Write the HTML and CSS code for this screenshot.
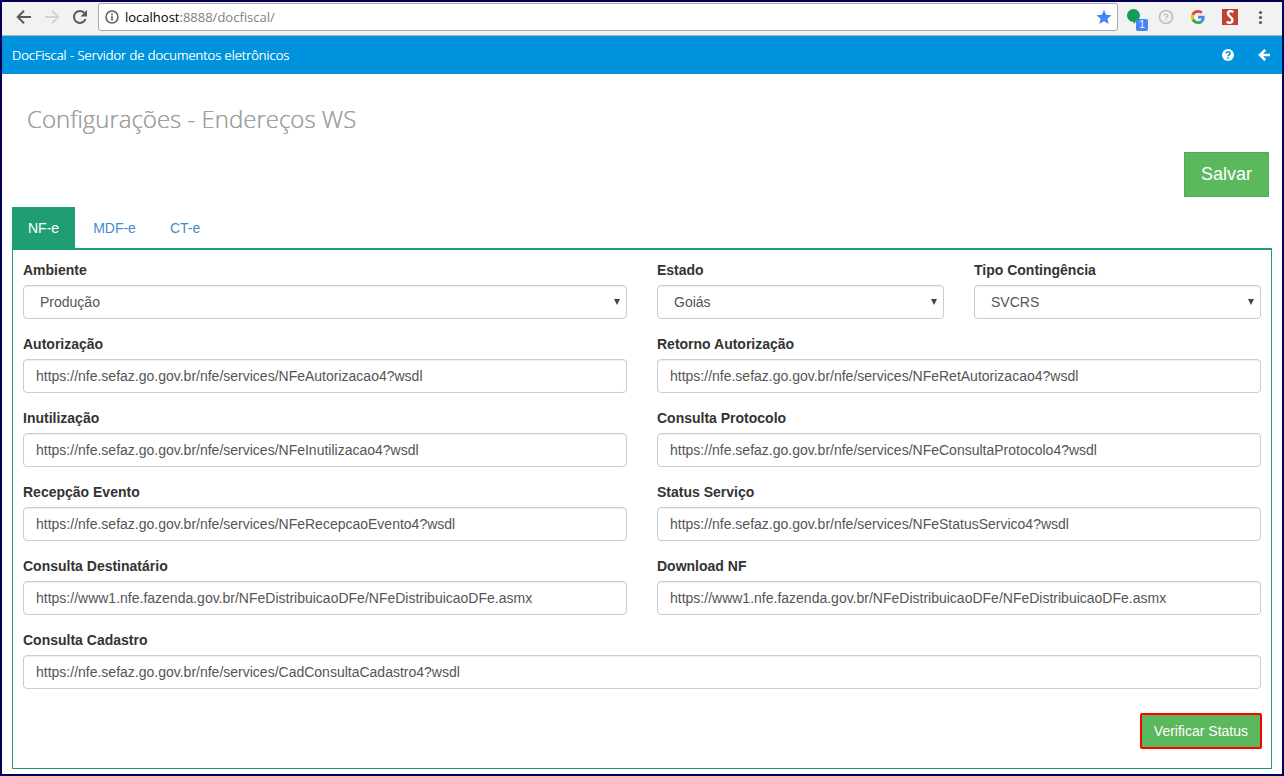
FILE: index.html
```html
<!DOCTYPE html>
<html lang="pt-BR">

<head>
    <meta charset="UTF-8">
    <meta name="viewport" content="width=device-width, initial-scale=1.0">
    <title>DocFiscal - Servidor de documentos eletrônicos</title>
    <link rel="stylesheet" href="styles.css">
</head>

<body>
    <!-- browser toolbar -->
    <div class="toolbar">
        <button class="tool" aria-label="Voltar">
            <svg width="16" height="16" viewBox="0 0 16 16" fill="none" stroke="#5a5a5a" stroke-width="2"><path d="M15 8H2.500M8 1.700L1.700 8L8 14.300" /></svg>
        </button>
        <button class="tool" aria-label="Avançar">
            <svg width="16" height="16" viewBox="0 0 16 16" fill="none" stroke="#d2d2d2" stroke-width="2"><path d="M1 8h12.500M8 1.700L14.300 8L8 14.300" /></svg>
        </button>
        <button class="tool" aria-label="Recarregar">
            <svg width="16" height="16" viewBox="0 0 16 16"><path d="M12.700 4.200A6 6 0 1 0 13.600 10" fill="none" stroke="#5a5a5a" stroke-width="2" /><path d="M15 1v6.500H8.500z" fill="#5a5a5a" /></svg>
        </button>
        <div class="address">
            <svg width="14" height="14" viewBox="0 0 14 14"><circle cx="7" cy="7" r="6" fill="none" stroke="#5a5a5a" stroke-width="1.500" /><path d="M6.200 6.200h1.600v4.200H6.200zM6.200 3.600h1.600v1.600H6.200z" fill="#5a5a5a" /></svg>
            <span class="url">localhost<span>:8888/docfiscal/</span></span>
            <svg width="16" height="16" viewBox="0 0 16 16"><path d="M8 .8l2.100 5 5.400.5-4.100 3.500 1.300 5.300L8 12.300l-4.700 2.800 1.300-5.300L.5 6.300l5.400-.5z" fill="#4285f4" /></svg>
        </div>
        <div class="extensions">
            <span class="hangouts">
                <svg width="16" height="16" viewBox="0 0 16 16"><path d="M7.500 0a6.500 6.500 0 1 1 0 13 6.500 6.500 0 1 1 0-13zM7 11h4l-3 4z" fill="#0f9d58" /></svg>
                <span class="count">1</span>
            </span>
            <svg width="16" height="16" viewBox="0 0 16 16" fill="none" stroke="#bdbdbd"><circle cx="8" cy="8" r="6.500" stroke-width="1.600" /><path d="M6.200 6.700C6.200 4.500 9.800 4.500 9.800 6.700C9.800 7.900 8 7.900 8 9.300M8 10.300v1.400" stroke-width="1.300" /></svg>
            <svg width="16" height="16" viewBox="-3 -3 54 54"><path fill="#4285f4" d="M46.500 24.500c0-1.600-.1-3.100-.4-4.500H24v9h12.700c-.6 2.900-2.200 5.400-4.700 7.100l7.500 5.800c4.400-4.100 7-10.100 7-17.400z" /><path fill="#34a853" d="M24 48c6.500 0 11.900-2.100 15.900-5.800L32 36.100c-2.100 1.500-4.800 2.400-8 2.400-6.200 0-11.500-4.200-13.500-9.900l-8 6.200C6.500 42.600 14.600 48 24 48z" /><path fill="#fbbc05" d="M10.500 28.600c-.5-1.500-.8-3-.8-4.600s.3-3.100.8-4.600l-8-6.200C.9 16.500 0 20.100 0 24s.9 7.500 2.500 10.800z" /><path fill="#ea4335" d="M24 9.500c3.500 0 6.700 1.200 9.200 3.600l6.900-6.900C35.900 2.400 30.500 0 24 0 14.600 0 6.500 5.400 2.500 13.200l8 6.200C12.500 13.700 17.800 9.500 24 9.500z" /></svg>
            <svg width="16" height="16" viewBox="0 0 16 16"><path d="M0 0h16v16H0z" fill="#c0432f" /><path d="M11.300 3.200C8.800 1.200 5.900 2.200 6 4.700C6.200 7.700 10.400 7.900 10.400 11C10.400 14.200 7 14.400 4.700 12.800" fill="none" stroke="#fff" stroke-width="2.400" /></svg>
            <svg width="16" height="16" viewBox="0 0 16 16" fill="#5a5a5a"><circle cx="6.500" cy="3.500" r="1.600" /><circle cx="6.500" cy="8.500" r="1.600" /><circle cx="6.500" cy="13.500" r="1.600" /></svg>
        </div>
    </div>

    <header class="navbar">
        <a class="brand" href="#">DocFiscal - Servidor de documentos eletrônicos</a>
        <nav>
            <a href="#" aria-label="Ajuda">
                <svg width="12" height="12" viewBox="0 0 12 12"><circle cx="6" cy="6" r="6" fill="#fff" /><path d="M4 4.500C4.200 2.200 8 2.200 8 4.400C8 5.700 6.100 5.600 6.100 7.300M6.100 8.200v1.600" fill="none" stroke="#0093dd" stroke-width="1.700" /></svg>
            </a>
            <a href="#" aria-label="Voltar">
                <svg width="12" height="12" viewBox="0 0 12 12" fill="none" stroke="#fff" stroke-width="2.600"><path d="M12 6H2M7.200 .9L2 6L7.200 11.100" /></svg>
            </a>
        </nav>
    </header>

    <main class="content">
        <h1>Configurações - Endereços WS</h1>
        <div class="actions">
            <button class="btn btn-lg">Salvar</button>
        </div>

        <ul class="tabs">
            <li><a class="active" href="#">NF-e</a></li>
            <li><a href="#">MDF-e</a></li>
            <li><a href="#">CT-e</a></li>
        </ul>

        <form class="panel">
            <div class="group half">
                <label for="ambiente">Ambiente</label>
                <div class="select">
                    <select id="ambiente">
                        <option>Produção</option>
                    </select>
                </div>
            </div>
            <div class="group">
                <label for="estado">Estado</label>
                <div class="select">
                    <select id="estado">
                        <option>Goiás</option>
                    </select>
                </div>
            </div>
            <div class="group">
                <label for="contingencia">Tipo Contingência</label>
                <div class="select">
                    <select id="contingencia">
                        <option>SVCRS</option>
                    </select>
                </div>
            </div>
            <div class="group half">
                <label for="autorizacao">Autorização</label>
                <input type="text" id="autorizacao" value="https://nfe.sefaz.go.gov.br/nfe/services/NFeAutorizacao4?wsdl">
            </div>
            <div class="group half">
                <label for="retorno">Retorno Autorização</label>
                <input type="text" id="retorno" value="https://nfe.sefaz.go.gov.br/nfe/services/NFeRetAutorizacao4?wsdl">
            </div>
            <div class="group half">
                <label for="inutilizacao">Inutilização</label>
                <input type="text" id="inutilizacao" value="https://nfe.sefaz.go.gov.br/nfe/services/NFeInutilizacao4?wsdl">
            </div>
            <div class="group half">
                <label for="protocolo">Consulta Protocolo</label>
                <input type="text" id="protocolo" value="https://nfe.sefaz.go.gov.br/nfe/services/NFeConsultaProtocolo4?wsdl">
            </div>
            <div class="group half">
                <label for="evento">Recepção Evento</label>
                <input type="text" id="evento" value="https://nfe.sefaz.go.gov.br/nfe/services/NFeRecepcaoEvento4?wsdl">
            </div>
            <div class="group half">
                <label for="status">Status Serviço</label>
                <input type="text" id="status" value="https://nfe.sefaz.go.gov.br/nfe/services/NFeStatusServico4?wsdl">
            </div>
            <div class="group half">
                <label for="destinatario">Consulta Destinatário</label>
                <input type="text" id="destinatario" value="https://www1.nfe.fazenda.gov.br/NFeDistribuicaoDFe/NFeDistribuicaoDFe.asmx">
            </div>
            <div class="group half">
                <label for="download">Download NF</label>
                <input type="text" id="download" value="https://www1.nfe.fazenda.gov.br/NFeDistribuicaoDFe/NFeDistribuicaoDFe.asmx">
            </div>
            <div class="group full">
                <label for="cadastro">Consulta Cadastro</label>
                <input type="text" id="cadastro" value="https://nfe.sefaz.go.gov.br/nfe/services/CadConsultaCadastro4?wsdl">
            </div>
            <div class="footer full">
                <button type="button" class="btn btn-verify">Verificar Status</button>
            </div>
        </form>
    </main>
</body>

</html>
```
FILE: styles.css
```css
* {
    box-sizing: border-box;
}

body {
    margin: 0;
    min-height: 100vh;
    border: 2px solid #000058;
    background-color: #fff;
    font-family: "Liberation Sans", Arial, sans-serif;
    font-size: 14px;
    line-height: 20px;
    color: #333;
}

svg {
    display: block;
    flex: none;
}

a {
    text-decoration: none;
}

/* browser toolbar */
.toolbar {
    display: flex;
    align-items: center;
    height: 34px;
    padding: 0 12px 3px 14px;
    gap: 12px;
    background-color: #f2f2f2;
    border-bottom: 1px solid #b5b5b5;
}

.tool {
    padding: 0;
    border: none;
    background: none;
}

.address {
    flex: 1;
    display: flex;
    align-items: center;
    gap: 6px;
    height: 28px;
    margin-left: -2px;
    padding: 0 5px 0 6px;
    background-color: #fff;
    border: 1px solid #a9a9a9;
    border-radius: 3px;
}

.url {
    flex: 1;
    font-family: "Open Sans", sans-serif;
    font-size: 13px;
    color: #000;
}

.url span {
    color: #808080;
}

.extensions {
    display: flex;
    align-items: center;
    gap: 16px;
    margin-left: -4px;
}

.hangouts {
    position: relative;
}

.count {
    position: absolute;
    left: 10px;
    top: 10px;
    width: 12px;
    height: 12px;
    border-radius: 2px;
    background-color: #4285f4;
    color: #fff;
    font-size: 10px;
    line-height: 12px;
    text-align: center;
}

/* page header */
.navbar {
    display: flex;
    justify-content: space-between;
    align-items: center;
    height: 38px;
    padding: 0 12px 0 10px;
    background-color: #0093dd;
    font-family: "Open Sans", sans-serif;
    font-size: 13px;
    font-weight: 300;
}

.brand {
    color: #fff;
    text-shadow: 0 0 0 #fff;
}

.navbar nav {
    display: flex;
    gap: 24px;
}

.content {
    padding: 30px 10px 5px;
}

h1 {
    margin: 0;
    padding-left: 15px;
    font-family: "Open Sans", sans-serif;
    font-size: 24px;
    line-height: 30px;
    font-weight: 300;
    color: #a0a0a0;
    text-shadow: 0 0 0 #a0a0a0;
}

.actions {
    display: flex;
    justify-content: flex-end;
    padding: 18px 3px 10px;
}

.btn {
    padding: 6px 12px;
    border: 1px solid #4cae4c;
    background-color: #5cb85c;
    color: #fff;
    font-family: inherit;
    font-size: 14px;
    line-height: 20px;
    cursor: pointer;
}

.btn:hover {
    background-color: #449d44;
}

.btn-lg {
    padding: 10px 16px;
    font-size: 18px;
    line-height: 23px;
}

.btn-verify {
    border: 2px solid #f00;
    border-radius: 2px;
}

/* tabs */
.tabs {
    display: flex;
    gap: 2px;
    margin: 0;
    padding: 0;
    list-style: none;
}

.tabs a {
    display: block;
    padding: 11px 16px 10px;
    color: #428bca;
}

.tabs a.active {
    background-color: #1f9e74;
    color: #fff;
}

/* form */
.panel {
    display: grid;
    grid-template-columns: repeat(4, 1fr);
    gap: 15px 30px;
    padding: 10px 10px 19px;
    border: 1px solid #1f9e74;
    border-top-width: 2px;
}

.half {
    grid-column: span 2;
}

.full {
    grid-column: span 4;
}

label {
    display: block;
    margin-bottom: 5px;
    font-weight: bold;
}

input,
select {
    display: block;
    width: 100%;
    height: 34px;
    padding: 6px 12px;
    border: 1px solid #ccc;
    border-radius: 4px;
    background-color: #fff;
    box-shadow: inset 0 1px 1px rgba(0, 0, 0, 0.075);
    color: #555;
    font-family: inherit;
    font-size: 14px;
}

select {
    appearance: none;
    padding: 6px 16px;
}

.select {
    position: relative;
}

.select::after {
    content: "";
    position: absolute;
    right: 7px;
    top: 14px;
    border: 3px solid transparent;
    border-top: 6px solid #444;
    border-bottom: none;
    pointer-events: none;
}

.footer {
    display: flex;
    justify-content: flex-end;
    margin-top: 9px;
    margin-right: -1px;
}

@media (max-width: 768px) {
    .half,
    .group {
        grid-column: span 4;
    }
}
```
